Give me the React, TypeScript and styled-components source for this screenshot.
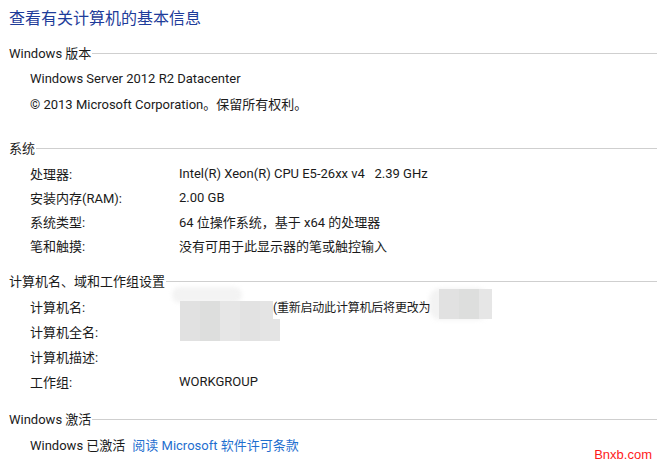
import React from "react";
import styled, { createGlobalStyle } from "styled-components";

const Global = createGlobalStyle`
  html, body { margin: 0; padding: 0; background: #ffffff; }
  body {
    font-family: Roboto, "Noto Sans CJK SC", sans-serif;
    font-size: 13px;
    color: #1a1a1a;
  }
`;

const Page = styled.div`
  position: relative;
  width: 658px;
  height: 464px;
  overflow: hidden;
  padding: 8px 1px 0 9px;
  box-sizing: border-box;
`;

const Title = styled.h1`
  margin: 0 0 12px 0;
  font-family: Roboto, "Noto Sans CJK SC", sans-serif;
  font-weight: 400;
  font-size: 16px;
  line-height: 22px;
  color: #1e3c9a;
`;

const Section = styled.section<{ $after: number }>`
  display: flex;
  flex-direction: column;
  margin-bottom: ${(p) => p.$after}px;
`;

const Header = styled.div`
  display: flex;
  align-items: center;
  height: 20px;
  gap: 1px;
`;

const HeaderText = styled.span`
  white-space: nowrap;
  color: #1a1a1a;
`;

const Rule = styled.div`
  flex: 1;
  height: 1px;
  margin-top: 3px;
  background: #cfcfcf;
`;

const Rows = styled.div`
  position: relative;
  display: flex;
  flex-direction: column;
  padding: 4px 0 0 21px;
`;

const Row = styled.div<{ $h?: number }>`
  display: grid;
  grid-template-columns: 149px 1fr;
  align-items: center;
  height: ${(p) => p.$h ?? 24}px;
  white-space: nowrap;
`;

const Line = styled.div`
  display: flex;
  align-items: center;
  height: 25px;
  gap: 7px;
  white-space: nowrap;
`;

const Value = styled.div`
  display: flex;
  align-items: center;
`;

const Gap = styled.span<{ $w: number }>`
  display: inline-block;
  width: ${(p) => p.$w}px;
`;

const Note = styled.span`
  position: relative;
  font-size: 12px;
  letter-spacing: -0.2px;
`;

const Link = styled.a`
  color: #1f6fcf;
  text-decoration: none;
  cursor: pointer;
`;

const Smudge = styled.div<{ $x: number; $y: number; $w: number; $h: number }>`
  position: absolute;
  left: ${(p) => p.$x}px;
  top: ${(p) => p.$y}px;
  width: ${(p) => p.$w}px;
  height: ${(p) => p.$h}px;
  background: linear-gradient(
    90deg,
    #e1e1e1 0 20px,
    #dddedd 20px 40px,
    #e6e6e6 40px 60px,
    #e2e2e2 60px 80px,
    #e4e4e4 80px 100px
  );
`;

const Haze = styled.div<{ $x: number; $y: number; $w: number; $h: number }>`
  position: absolute;
  left: ${(p) => p.$x}px;
  top: ${(p) => p.$y}px;
  width: ${(p) => p.$w}px;
  height: ${(p) => p.$h}px;
  border-radius: 12px;
  background: #f3f3f3;
  filter: blur(2px);
`;

const Watermark = styled.div`
  position: absolute;
  right: 6px;
  bottom: 2px;
  font-family: "Liberation Sans", Arial, sans-serif;
  font-size: 13px;
  color: #ff1a1a;
`;

type Pair = [string, React.ReactNode];

const systemRows: Pair[] = [
  ["处理器:", <>Intel(R) Xeon(R) CPU E5-26xx v4&nbsp;&nbsp;&nbsp;2.39 GHz</>],
  ["安装内存(RAM):", "2.00 GB"],
  ["系统类型:", "64 位操作系统，基于 x64 的处理器"],
  ["笔和触摸:", "没有可用于此显示器的笔或触控输入"],
];

export default function App() {
  return (
    <>
      <Global />
      <Page>
        <Title>查看有关计算机的基本信息</Title>

        <Section $after={21}>
          <Header>
            <HeaderText>Windows 版本</HeaderText>
            <Rule />
          </Header>
          <Rows>
            <Line>Windows Server 2012 R2 Datacenter</Line>
            <Line>© 2013 Microsoft Corporation。保留所有权利。</Line>
          </Rows>
        </Section>

        <Section $after={13}>
          <Header>
            <HeaderText>系统</HeaderText>
            <Rule />
          </Header>
          <Rows>
            {systemRows.map(([k, v]) => (
              <Row key={k}>
                <span>{k}</span>
                <Value>{v}</Value>
              </Row>
            ))}
          </Rows>
        </Section>

        <Section $after={14}>
          <Header>
            <HeaderText>计算机名、域和工作组设置</HeaderText>
            <Rule />
          </Header>
          <Rows>
            <Haze $x={163} $y={-3} $w={70} $h={16} />
            <Smudge $x={171} $y={11} $w={93} $h={18} />
            <Smudge $x={171} $y={29} $w={100} $h={22} />
            <Haze $x={420} $y={-2} $w={60} $h={32} />
            <Smudge $x={430} $y={-1} $w={53} $h={30} />
            <Row $h={25}>
              <span>计算机名:</span>
              <Value>
                <Gap $w={94} />
                <Note>(重新启动此计算机后将更改为</Note>
              </Value>
            </Row>
            <Row $h={25}>
              <span>计算机全名:</span>
              <Value />
            </Row>
            <Row $h={25}>
              <span>计算机描述:</span>
              <Value />
            </Row>
            <Row $h={25}>
              <span>工作组:</span>
              <Value>WORKGROUP</Value>
            </Row>
          </Rows>
        </Section>

        <Section $after={0}>
          <Header>
            <HeaderText>Windows 激活</HeaderText>
            <Rule />
          </Header>
          <Rows>
            <Line>
              <span>Windows 已激活</span>
              <Link>阅读 Microsoft 软件许可条款</Link>
            </Line>
          </Rows>
        </Section>

        <Watermark>Bnxb.com</Watermark>
      </Page>
    </>
  );
}
